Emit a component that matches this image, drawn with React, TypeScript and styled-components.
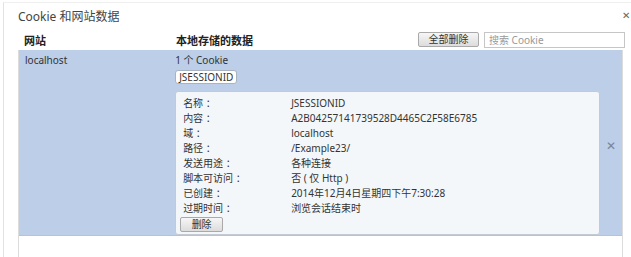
import React from "react";
import styled, { createGlobalStyle } from "styled-components";

const GlobalStyle = createGlobalStyle`
  html, body {
    margin: 0;
    padding: 0;
    background: #ffffff;
  }
  body {
    font-family: "Noto Sans", "Noto Sans CJK SC", sans-serif;
    color: #333333;
    overflow: hidden;
  }
`;

const Dialog = styled.div`
  margin: 2px 0 0 3px;
  height: 255px;
  border-left: 1px solid #e2e2e2;
  border-top: 1px solid #f0f0f0;
  display: flex;
  flex-direction: column;
  box-sizing: border-box;
`;

const TitleBar = styled.div`
  display: flex;
  align-items: flex-start;
  justify-content: space-between;
  height: 27px;
  padding: 6px 1px 0 14px;
  box-sizing: border-box;
`;

const Title = styled.div`
  font-size: 12px;
  line-height: 16px;
  color: #444444;
`;

const CloseX = styled.span`
  font-size: 10px;
  line-height: 10px;
  color: #666666;
  margin-top: 1px;
`;

const HeaderRow = styled.div`
  display: flex;
  align-items: center;
  height: 19px;
  margin: 0 6px 1px 0;
  padding-left: 20px;
`;

const HeadCell = styled.div<{ $width?: number }>`
  font-size: 11px;
  font-weight: 700;
  color: #222222;
  width: ${(p) => (p.$width ? `${p.$width}px` : "auto")};
  flex: ${(p) => (p.$width ? "none" : "1")};
`;

const GreyButton = styled.button<{ $width: number }>`
  width: ${(p) => p.$width}px;
  height: 15px;
  padding: 0;
  font-family: inherit;
  font-size: 10px;
  line-height: 13px;
  color: #333333;
  background: linear-gradient(#f6f6f6, #dcdcdc);
  border: 1px solid #a9a9a9;
  border-radius: 2px;
  box-sizing: border-box;
`;

const Search = styled.input`
  width: 141px;
  height: 16px;
  margin-left: 5px;
  padding: 0 4px;
  box-sizing: border-box;
  border: 1px solid #c6c6c6;
  font-family: inherit;
  font-size: 10px;
  color: #333333;
  &::placeholder {
    color: #9a9a9a;
  }
`;

const List = styled.div`
  flex: 1;
  margin-left: 14px;
  width: 605px;
  border-left: 1px solid #dcdcdc;
  border-right: 1px solid #dcdcdc;
  box-sizing: border-box;
`;

const SelectedRow = styled.div`
  display: flex;
  height: 186px;
  background: #bccee8;
  border-bottom: 1px solid #b0c3df;
  box-sizing: border-box;
  font-size: 10px;
`;

const SiteCell = styled.div`
  width: 157px;
  padding: 3px 0 0 6px;
  box-sizing: border-box;
  line-height: 14px;
  color: #333333;
`;

const DataCell = styled.div`
  flex: 1;
  padding-top: 3px;
  display: flex;
  flex-direction: column;
  align-items: flex-start;
`;

const CountText = styled.div`
  line-height: 14px;
`;

const Chip = styled.div`
  margin-top: 3px;
  height: 14px;
  line-height: 12px;
  padding: 0 3px;
  background: #ffffff;
  border: 1px solid #a9b3c0;
  border-radius: 3px;
  box-sizing: border-box;
  font-size: 10px;
  color: #333333;
`;

const Card = styled.div`
  margin-top: 7px;
  width: 425px;
  height: 145px;
  padding: 3px 4px 0 4px;
  box-sizing: border-box;
  background: #f4f7f9;
  border: 1px solid #c4cad2;
  border-radius: 3px;
`;

const InfoRow = styled.div`
  display: grid;
  grid-template-columns: 108px 1fr;
  height: 15px;
  align-items: center;
  padding-left: 3px;
  color: #333333;
  font-size: 10px;
`;

const RemoveX = styled.div`
  width: 22px;
  display: flex;
  align-items: center;
  justify-content: center;
  padding-top: 5px;
  color: #7a8494;
  font-size: 12px;
`;

const info: [string, string][] = [
  ["名称 ：", "JSESSIONID"],
  ["内容 ：", "A2B04257141739528D4465C2F58E6785"],
  ["域 ：", "localhost"],
  ["路径 ：", "/Example23/"],
  ["发送用途 ：", "各种连接"],
  ["脚本可访问 ：", "否 ( 仅 Http )"],
  ["已创建 ：", "2014年12月4日星期四下午7:30:28"],
  ["过期时间 ：", "浏览会话结束时"],
];

export default function App() {
  return (
    <>
      <GlobalStyle />
      <Dialog>
        <TitleBar>
          <Title>Cookie 和网站数据</Title>
          <CloseX>✕</CloseX>
        </TitleBar>
        <HeaderRow>
          <HeadCell $width={152}>网站</HeadCell>
          <HeadCell>本地存储的数据</HeadCell>
          <GreyButton $width={61}>全部删除</GreyButton>
          <Search placeholder="搜索 Cookie" />
        </HeaderRow>
        <List>
          <SelectedRow>
            <SiteCell>localhost</SiteCell>
            <DataCell>
              <CountText>1 个 Cookie</CountText>
              <Chip>JSESSIONID</Chip>
              <Card>
                {info.map(([k, v]) => (
                  <InfoRow key={k}>
                    <span>{k}</span>
                    <span>{v}</span>
                  </InfoRow>
                ))}
                <GreyButton $width={43} style={{ marginTop: 2 }}>
                  删除
                </GreyButton>
              </Card>
            </DataCell>
            <RemoveX>✕</RemoveX>
          </SelectedRow>
        </List>
      </Dialog>
    </>
  );
}
